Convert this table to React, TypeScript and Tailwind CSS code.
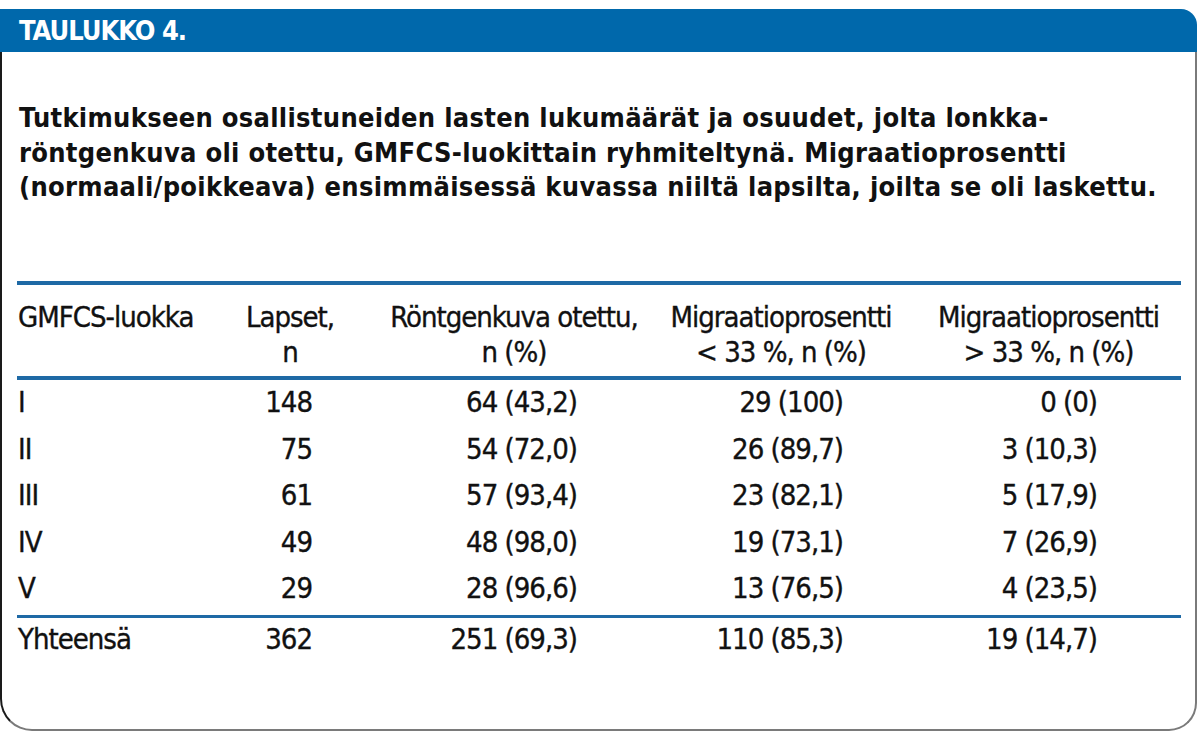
import React from 'react';

const rows = [
  ['I', '148', '64 (43,2)', '29 (100)', '0 (0)'],
  ['II', '75', '54 (72,0)', '26 (89,7)', '3 (10,3)'],
  ['III', '61', '57 (93,4)', '23 (82,1)', '5 (17,9)'],
  ['IV', '49', '48 (98,0)', '19 (73,1)', '7 (26,9)'],
  ['V', '29', '28 (96,6)', '13 (76,5)', '4 (23,5)'],
];

const total = ['Yhteensä', '362', '251 (69,3)', '110 (85,3)', '19 (14,7)'];

function DataRow({ cells, className }: { cells: string[]; className: string }) {
  return (
    <div className={`grid grid-cols-[201px_144px_304px_230px_285px] items-center ${className}`}>
      <div className="pl-[1px]">{cells[0]}</div>
      <div className="text-right pr-[50px]">{cells[1]}</div>
      <div className="text-right pr-[89px]">{cells[2]}</div>
      <div className="text-right pr-[53px]">{cells[3]}</div>
      <div className="text-right pr-[84px]">{cells[4]}</div>
    </div>
  );
}

export default function App() {
  return (
    <div
      className="w-[1199px] h-[733px] bg-white pt-[9px] text-[#111]"
      style={{ fontFamily: '"Liberation Sans Narrow", "DejaVu Sans Condensed", "Roboto Condensed", sans-serif' }}
    >
      {/* Blue title bar */}
      <div className="w-[1197px] h-[43px] bg-[#0068ab] rounded-tr-[16px] pl-[19px] flex items-center">
        <span className="text-white font-bold text-[27px] tracking-[-1px] leading-none">TAULUKKO 4.</span>
      </div>

      <div className="w-[1197px] h-[679px] border-l-2 border-l-[#1a1a1a] border-r-2 border-b-2 border-r-[#7a7a7a] border-b-[#7a7a7a] rounded-bl-[32px] rounded-br-[28px]">
        <p className="pt-[49px] pl-[17px] text-[27px] font-bold leading-[34.5px] tracking-[0.3px]">
          Tutkimukseen osallistuneiden lasten lukumäärät ja osuudet, jolta lonkka-
          <br />
          röntgenkuva oli otettu, GMFCS-luokittain ryhmiteltynä. Migraatioprosentti
          <br />
          (normaali/poikkeava) ensimmäisessä kuvassa niiltä lapsilta, joilta se oli laskettu.
        </p>

        <div className="ml-[15px] mt-[76px] w-[1164px] text-[29px] tracking-[-1px] [-webkit-text-stroke:0.35px_#111]">
          {/* Header */}
          <div className="grid grid-cols-[201px_144px_304px_230px_285px] border-t-4 border-b-4 border-[#1e69a5] pt-[15px] pb-[6px] leading-[35px]">
            <div className="pl-[1px]">GMFCS-luokka</div>
            <div className="text-center">
              Lapset,
              <br />n
            </div>
            <div className="text-center">
              Röntgenkuva otettu,
              <br />n (%)
            </div>
            <div className="text-center">
              Migraatioprosentti
              <br />
              &lt; 33 %, n (%)
            </div>
            <div className="text-center pl-[20px]">
              Migraatioprosentti
              <br />
              &gt; 33 %, n (%)
            </div>
          </div>

          {rows.map((r) => (
            <DataRow key={r[0]} cells={r} className="h-[46.5px]" />
          ))}

          <div className="mt-[3px] border-t-[3px] border-[#1e69a5]">
            <DataRow cells={total} className="h-[44px]" />
          </div>
        </div>
      </div>
    </div>
  );
}
